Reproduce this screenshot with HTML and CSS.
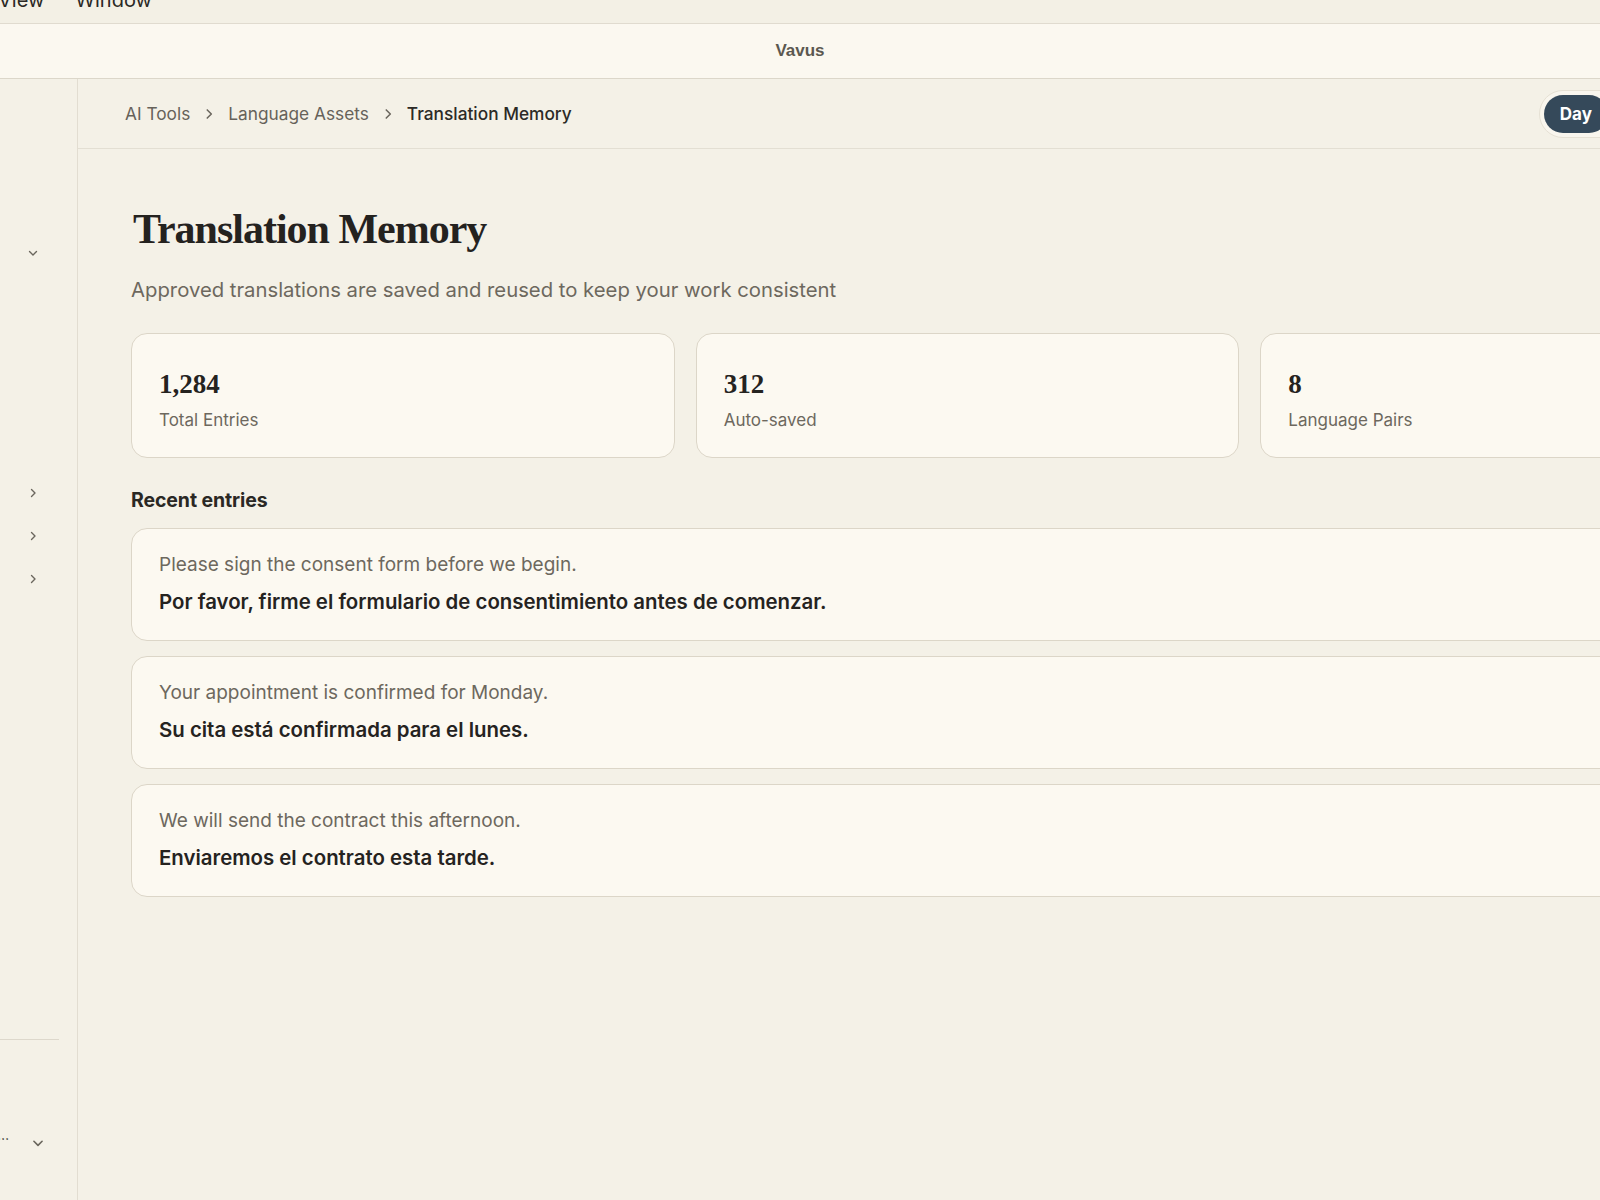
FILE: index.html
```html
<!DOCTYPE html>
<html lang="en">
<head>
<meta charset="utf-8">
<title>Vavus – Translation Memory</title>
<link rel="stylesheet" href="styles.css">
</head>
<body>
<div class="menubar">
  <span class="menu-item menu-view">View</span>
  <span class="menu-item">Window</span>
</div>
<div class="titlebar">Vavus</div>
<div class="app">
  <aside class="sidebar">
    <div class="side-row side-first">
      <svg class="chev" viewBox="0 0 12 12"><path d="M2.5 4.5 L6 8 L9.5 4.5" /></svg>
    </div>
    <div class="side-list">
      <div class="side-row"><svg class="chev" viewBox="0 0 12 12"><path d="M4.5 2.5 L8 6 L4.5 9.5" /></svg></div>
      <div class="side-row"><svg class="chev" viewBox="0 0 12 12"><path d="M4.5 2.5 L8 6 L4.5 9.5" /></svg></div>
      <div class="side-row"><svg class="chev" viewBox="0 0 12 12"><path d="M4.5 2.5 L8 6 L4.5 9.5" /></svg></div>
    </div>
    <div class="side-footer">
      <div class="side-user">
        <span class="ellipsis">…</span>
        <svg class="chev chev-user" viewBox="0 0 12 12"><path d="M2.5 4.5 L6 8 L9.5 4.5" /></svg>
      </div>
    </div>
  </aside>
  <main class="main">
    <div class="crumbbar">
      <nav class="crumbs">
        <span class="crumb">AI Tools</span>
        <svg class="crumb-sep" viewBox="0 0 12 12"><path d="M4.5 2.5 L8 6 L4.5 9.5" /></svg>
        <span class="crumb">Language Assets</span>
        <svg class="crumb-sep" viewBox="0 0 12 12"><path d="M4.5 2.5 L8 6 L4.5 9.5" /></svg>
        <span class="crumb crumb-current">Translation Memory</span>
      </nav>
      <div class="toggle">
        <span class="toggle-btn active">Day</span>
        <span class="toggle-btn">Night</span>
      </div>
    </div>
    <div class="content">
      <h1 class="title">Translation Memory</h1>
      <p class="subtitle">Approved translations are saved and reused to keep your work consistent</p>
      <div class="stats">
        <div class="stat">
          <div class="stat-num">1,284</div>
          <div class="stat-label">Total Entries</div>
        </div>
        <div class="stat">
          <div class="stat-num">312</div>
          <div class="stat-label">Auto-saved</div>
        </div>
        <div class="stat">
          <div class="stat-num">8</div>
          <div class="stat-label">Language Pairs</div>
        </div>
      </div>
      <h2 class="section-title">Recent entries</h2>
      <div class="entries">
        <div class="entry">
          <div class="entry-src">Please sign the consent form before we begin.</div>
          <div class="entry-tgt">Por favor, firme el formulario de consentimiento antes de comenzar.</div>
        </div>
        <div class="entry">
          <div class="entry-src">Your appointment is confirmed for Monday.</div>
          <div class="entry-tgt">Su cita está confirmada para el lunes.</div>
        </div>
        <div class="entry">
          <div class="entry-src">We will send the contract this afternoon.</div>
          <div class="entry-tgt">Enviaremos el contrato esta tarde.</div>
        </div>
      </div>
    </div>
  </main>
</div>
</body>
</html>
```

FILE: styles.css
```css
html, body {
  margin: 0;
  padding: 0;
}
body {
  width: 1600px;
  height: 1200px;
  overflow: hidden;
  background: #f4f1e7;
  font-family: Inter, "Noto Sans", "Liberation Sans", sans-serif;
  color: #2a2824;
}

.menubar {
  height: 23px;
  background: #f3f0e5;
  border-bottom: 1px solid #e0dbcf;
  display: flex;
  gap: 31px;
  overflow: hidden;
}
.menu-item {
  font-size: 20px;
  line-height: 20px;
  margin-top: -10px;
  color: #2b2925;
}
.menu-view {
  margin-left: -2px;
}

.titlebar {
  height: 54px;
  background: #fbf8f0;
  border-bottom: 1px solid #dcd7ca;
  display: flex;
  align-items: center;
  justify-content: center;
  font-family: "Liberation Sans", Arial, sans-serif;
  font-weight: 700;
  font-size: 17px;
  color: #5b5850;
}

.app {
  display: flex;
  height: 1121px;
  width: 1858px;
}

.sidebar {
  flex: 0 0 78px;
  border-right: 1px solid #e2ddd1;
  display: flex;
  flex-direction: column;
  padding-top: 154px;
  box-sizing: border-box;
}
.side-row {
  height: 43px;
  display: flex;
  align-items: center;
  padding-left: 27px;
}
.side-first {
  height: 40px;
}
.side-list {
  margin-top: 198px;
}
.chev {
  width: 12px;
  height: 12px;
  fill: none;
  stroke: #6a665d;
  stroke-width: 1.4;
  stroke-linecap: round;
  stroke-linejoin: round;
}
.side-footer {
  margin-top: auto;
  margin-right: 18px;
  border-top: 1px solid #ddd8cc;
  height: 161px;
  box-sizing: border-box;
  padding-top: 80px;
}
.side-user {
  height: 38px;
  display: flex;
  align-items: center;
}
.ellipsis {
  font-size: 14px;
  color: #3a3833;
  margin-left: -3px;
  margin-top: -10px;
}
.chev-user {
  width: 14px;
  height: 14px;
  margin-left: 22px;
  margin-top: 8px;
}

.main {
  flex: 0 0 1780px;
  display: flex;
  flex-direction: column;
}

.crumbbar {
  height: 69px;
  border-bottom: 1px solid #e3dfd3;
  display: flex;
  align-items: center;
  justify-content: space-between;
  padding: 0 164px 0 47px;
  flex-shrink: 0;
}
.crumbs {
  display: flex;
  align-items: center;
  gap: 12px;
  font-size: 17.3px;
}
.crumb {
  color: #66625a;
}
.crumb-current {
  color: #2c2a26;
  font-weight: 500;
}
.crumb-sep {
  width: 14px;
  height: 14px;
  fill: none;
  stroke: #6a665d;
  stroke-width: 1.3;
  stroke-linecap: round;
  stroke-linejoin: round;
  margin-top: 1px;
}

.toggle {
  display: flex;
  align-items: center;
  padding: 4px;
  border: 1px solid #e6e1d4;
  border-radius: 999px;
  background: #f9f6ee;
  gap: 4px;
}
.toggle-btn {
  height: 38px;
  padding: 0 16px;
  border-radius: 999px;
  display: flex;
  align-items: center;
  font-size: 17px;
  font-weight: 700;
  color: #5b5850;
}
.toggle-btn.active {
  background: #35495a;
  color: #ffffff;
}

.content {
  padding: 0 54px 0 53px;
}
.title {
  margin: 54px 0 0 2px;
  font-family: "Liberation Serif", "Times New Roman", serif;
  font-weight: 700;
  font-size: 42px;
  letter-spacing: -1px;
  line-height: 52px;
  color: #24221f;
}
.subtitle {
  margin: 22px 0 0 0;
  font-size: 20.3px;
  line-height: 26px;
  color: #6d685e;
}

.stats {
  display: grid;
  grid-template-columns: repeat(3, 1fr);
  gap: 21px;
  margin-top: 30px;
}
.stat {
  height: 125px;
  box-sizing: border-box;
  background: #fcf9f1;
  border: 1.5px solid #dcd6c8;
  border-radius: 16px;
  padding: 34px 27px 0 27px;
}
.stat-num {
  font-family: "Liberation Serif", "Times New Roman", serif;
  font-weight: 700;
  font-size: 27px;
  line-height: 32px;
  color: #25231f;
}
.stat-label {
  margin-top: 9px;
  font-size: 17px;
  line-height: 22px;
  color: #6d685e;
}

.section-title {
  margin: 29px 0 0 0;
  font-size: 19.5px;
  line-height: 26px;
  font-weight: 700;
  color: #2a2824;
  letter-spacing: -0.1px;
}

.entries {
  display: flex;
  flex-direction: column;
  gap: 15px;
  margin-top: 15px;
}
.entry {
  height: 113px;
  box-sizing: border-box;
  background: #fcf9f1;
  border: 1.5px solid #dcd6c8;
  border-radius: 16px;
  padding: 23px 27px 0 27px;
}
.entry-src {
  font-size: 19px;
  line-height: 26px;
  color: #6d685e;
}
.entry-tgt {
  margin-top: 11px;
  font-size: 20.4px;
  line-height: 26px;
  font-weight: 600;
  color: #25231f;
}
```
